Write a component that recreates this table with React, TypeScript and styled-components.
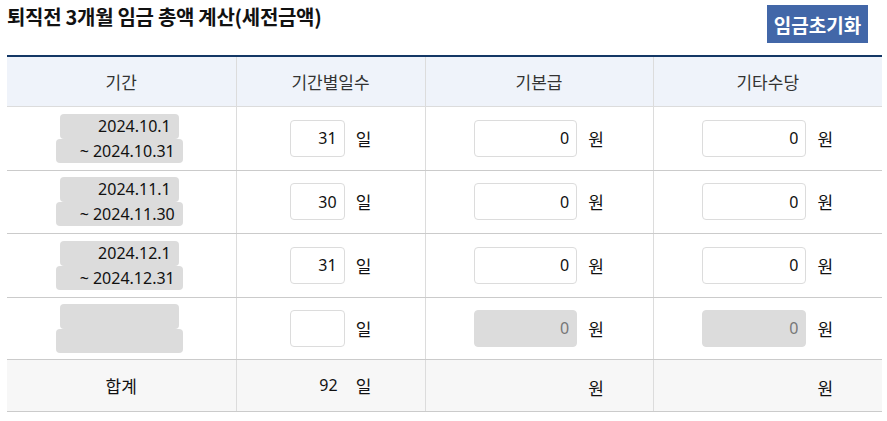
import React from "react";
import styled, { createGlobalStyle } from "styled-components";

const Global = createGlobalStyle`
  html, body { margin: 0; padding: 0; background: #fff; }
  body { font-family: "Noto Sans", "Noto Sans CJK KR", sans-serif; color: #111; }
  * { box-sizing: border-box; }
`;

const Page = styled.div`
  padding: 0 5px 0 7px;
  width: 887px;
`;

const TopBar = styled.div`
  display: flex;
  justify-content: space-between;
  align-items: flex-start;
  height: 55px;
  padding-right: 14px;
`;

const Title = styled.h2`
  margin: 3px 0 0;
  font-family: "Noto Sans CJK KR", "Noto Sans", sans-serif;
  font-size: 20px;
  font-weight: 700;
  line-height: 28px;
  letter-spacing: -0.3px;
  color: #111;
`;

const ResetButton = styled.button`
  margin-top: 5px;
  width: 101px;
  height: 38px;
  border: none;
  background: #4267a8;
  color: #fff;
  font-family: "Noto Sans CJK KR", sans-serif;
  font-size: 19px;
  font-weight: 700;
  padding: 0;
  cursor: pointer;
`;

const Table = styled.table`
  width: 875px;
  border-collapse: collapse;
  border-top: 2px solid #133765;
  table-layout: fixed;
  font-size: 16px;
`;

const HeadCell = styled.th`
  height: 50px;
  background: #eff3fa;
  font-family: "Noto Sans CJK KR", sans-serif;
  font-size: 17px;
  font-weight: 400;
  color: #333;
  text-align: center;
  border-left: 1px solid #dcdcdc;
  border-bottom: 1px solid #dcdcdc;
  &:first-child { border-left: none; }
`;

const Row = styled.tr<{ $h: number }>`
  height: ${(p) => p.$h}px;
`;

const Cell = styled.td<{ $shift?: number }>`
  padding: 0 ${(p) => p.$shift ?? 0}px 0 0;
  text-align: center;
  vertical-align: middle;
  border-left: 1px solid #dcdcdc;
  border-bottom: 1px solid #cbcbcb;
  &:first-child { border-left: none; }
`;

const TotalRow = styled.tr`
  height: 52px;
  background: #f7f7f7;
  border-top: 1px solid #133765;
`;

const TotalLabel = styled.span`
  font-family: "Noto Sans CJK KR", sans-serif;
  font-size: 17px;
`;

const DateStack = styled.div`
  display: flex;
  flex-direction: column;
  align-items: center;
`;

const DateBox = styled.div<{ $w: number; $h: number }>`
  width: ${(p) => p.$w}px;
  height: ${(p) => p.$h}px;
  background: #dcdcdc;
  border-radius: 4px;
  text-align: right;
  padding-right: 8px;
  font-size: 16px;
  line-height: ${(p) => p.$h}px;
  color: #111;
  white-space: nowrap;
`;

const Field = styled.div`
  display: inline-flex;
  align-items: center;
  gap: 11px;
`;

const NumInput = styled.input<{ $w: number }>`
  width: ${(p) => p.$w}px;
  height: 37px;
  border: 1px solid #dcdcdc;
  border-radius: 4px;
  background: #fff;
  text-align: right;
  padding: 0 7px 0 0;
  font-family: "Noto Sans", sans-serif;
  font-size: 16px;
  color: #111;
  outline: none;
  &:disabled {
    background: #dcdcdc;
    color: #777;
    -webkit-text-fill-color: #777;
    opacity: 1;
  }
`;

const NumText = styled.span<{ $w: number }>`
  display: inline-block;
  width: ${(p) => p.$w}px;
  text-align: right;
  padding-right: 7px;
`;

const Unit = styled.span`
  font-family: "Noto Sans CJK KR", sans-serif;
  font-size: 17px;
  color: #111;
`;

type R = { from: string; to: string; days: string; h: number };
const rows: R[] = [
  { from: "2024.10.1", to: "~ 2024.10.31", days: "31", h: 64 },
  { from: "2024.11.1", to: "~ 2024.11.30", days: "30", h: 63 },
  { from: "2024.12.1", to: "~ 2024.12.31", days: "31", h: 64 },
  { from: "", to: "", days: "", h: 62 },
];

export default function App() {
  return (
    <Page>
      <Global />
      <TopBar>
        <Title>퇴직전 3개월 임금 총액 계산(세전금액)</Title>
        <ResetButton>임금초기화</ResetButton>
      </TopBar>
      <Table>
        <colgroup>
          <col style={{ width: 229 }} />
          <col style={{ width: 189 }} />
          <col style={{ width: 228 }} />
          <col style={{ width: 229 }} />
        </colgroup>
        <thead>
          <tr>
            <HeadCell>기간</HeadCell>
            <HeadCell>기간별일수</HeadCell>
            <HeadCell>기본급</HeadCell>
            <HeadCell>기타수당</HeadCell>
          </tr>
        </thead>
        <tbody>
          {rows.map((r, i) => {
            const empty = r.days === "";
            return (
              <Row key={i} $h={r.h}>
                <Cell $shift={4}>
                  <DateStack>
                    <DateBox $w={119} $h={25}>{r.from}</DateBox>
                    <DateBox $w={127} $h={24}>{r.to}</DateBox>
                  </DateStack>
                </Cell>
                <Cell>
                  <Field>
                    <NumInput $w={55} defaultValue={r.days} readOnly />
                    <Unit>일</Unit>
                  </Field>
                </Cell>
                <Cell>
                  <Field>
                    <NumInput $w={103} defaultValue="0" disabled={empty} readOnly />
                    <Unit>원</Unit>
                  </Field>
                </Cell>
                <Cell>
                  <Field>
                    <NumInput $w={104} defaultValue="0" disabled={empty} readOnly />
                    <Unit>원</Unit>
                  </Field>
                </Cell>
              </Row>
            );
          })}
          <TotalRow>
            <Cell><TotalLabel>합계</TotalLabel></Cell>
            <Cell>
              <Field>
                <NumText $w={55}>92</NumText>
                <Unit>일</Unit>
              </Field>
            </Cell>
            <Cell>
              <Field>
                <NumText $w={103}></NumText>
                <Unit>원</Unit>
              </Field>
            </Cell>
            <Cell>
              <Field>
                <NumText $w={104}></NumText>
                <Unit>원</Unit>
              </Field>
            </Cell>
          </TotalRow>
        </tbody>
      </Table>
    </Page>
  );
}
